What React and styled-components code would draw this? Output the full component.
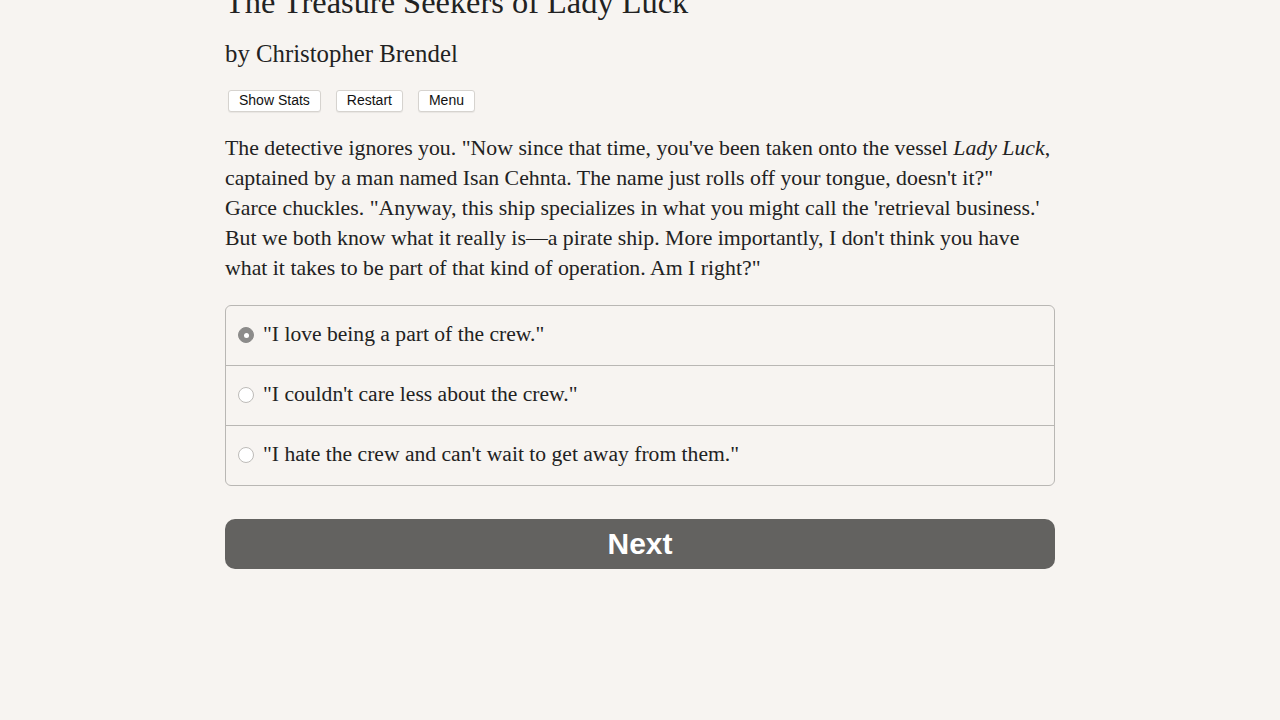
import React, { useState } from 'react';
import styled, { createGlobalStyle } from 'styled-components';

const GlobalStyle = createGlobalStyle`
  html, body {
    margin: 0;
    padding: 0;
    background: #f7f4f1;
  }
  body {
    font-family: "Liberation Serif", "Times New Roman", serif;
    color: #222;
  }
`;

const Page = styled.main`
  width: 830px;
  margin: 0 auto;
`;

const Title = styled.h1`
  margin: -16px 0 0;
  font-weight: normal;
  font-size: 32.4px;
  line-height: 36px;
  color: #222;
`;

const Author = styled.h2`
  margin: 19px 0 0;
  font-weight: normal;
  font-size: 24.8px;
  line-height: 30px;
  color: #222;
`;

const Toolbar = styled.div`
  display: flex;
  gap: 15px;
  margin: 21px 0 0 3px;
`;

const ToolButton = styled.button`
  font-family: "Liberation Sans", Arial, sans-serif;
  font-size: 14px;
  line-height: 17px;
  padding: 1px 10px 2px;
  background: #fff;
  color: #111;
  border: 1px solid #d6d3cf;
  border-radius: 3px;
  box-shadow: 0 1px 1px rgba(0, 0, 0, 0.06);
`;

const Passage = styled.p`
  margin: 21px 0 0;
  font-size: 21.8px;
  line-height: 30px;
  white-space: nowrap;
`;

const Choices = styled.div`
  margin-top: 22px;
  border: 1px solid #b9b7b4;
  border-radius: 6px;
  overflow: hidden;
`;

const Choice = styled.label`
  display: flex;
  align-items: center;
  gap: 9px;
  height: 59px;
  box-sizing: border-box;
  padding: 0 12px 3px;
  font-size: 21.6px;
  cursor: pointer;
  & + & {
    height: 60px;
    border-top: 1px solid #b9b7b4;
  }
`;

const Radio = styled.span`
  flex: none;
  width: 16px;
  height: 16px;
  margin-top: 2px;
  border-radius: 50%;
  box-sizing: border-box;
  background: ${(p) => (p.$checked ? '#8c8b8a' : '#fff')};
  border: 1px solid ${(p) => (p.$checked ? '#8c8b8a' : '#bebcb9')};
  display: grid;
  place-items: center;
  &::after {
    content: '';
    display: ${(p) => (p.$checked ? 'block' : 'none')};
    width: 5px;
    height: 5px;
    border-radius: 50%;
    background: #fff;
  }
`;

const NextButton = styled.button`
  display: block;
  width: 100%;
  margin-top: 33px;
  height: 50px;
  border: none;
  border-radius: 10px;
  background: #636260;
  color: #fff;
  font-family: "Liberation Sans", Arial, sans-serif;
  font-weight: bold;
  font-size: 30px;
  cursor: pointer;
`;

const choices = [
  '"I love being a part of the crew."',
  '"I couldn\'t care less about the crew."',
  '"I hate the crew and can\'t wait to get away from them."',
];

export default function App() {
  const [selected, setSelected] = useState(0);
  return (
    <>
      <GlobalStyle />
      <Page>
        <Title>The Treasure Seekers of Lady Luck</Title>
        <Author>by Christopher Brendel</Author>
        <Toolbar>
          <ToolButton>Show Stats</ToolButton>
          <ToolButton>Restart</ToolButton>
          <ToolButton>Menu</ToolButton>
        </Toolbar>
        <Passage>
          The detective ignores you. "Now since that time, you've been taken onto the vessel{' '}
          <i>Lady Luck</i>,<br />
          captained by a man named Isan Cehnta. The name just rolls off your tongue, doesn't it?"
          <br />
          Garce chuckles. "Anyway, this ship specializes in what you might call the 'retrieval business.'
          <br />
          But we both know what it really is—a pirate ship. More importantly, I don't think you have
          <br />
          what it takes to be part of that kind of operation. Am I right?"
        </Passage>
        <Choices>
          {choices.map((text, i) => (
            <Choice key={i} onClick={() => setSelected(i)}>
              <Radio $checked={selected === i} />
              {text}
            </Choice>
          ))}
        </Choices>
        <NextButton>Next</NextButton>
      </Page>
    </>
  );
}
